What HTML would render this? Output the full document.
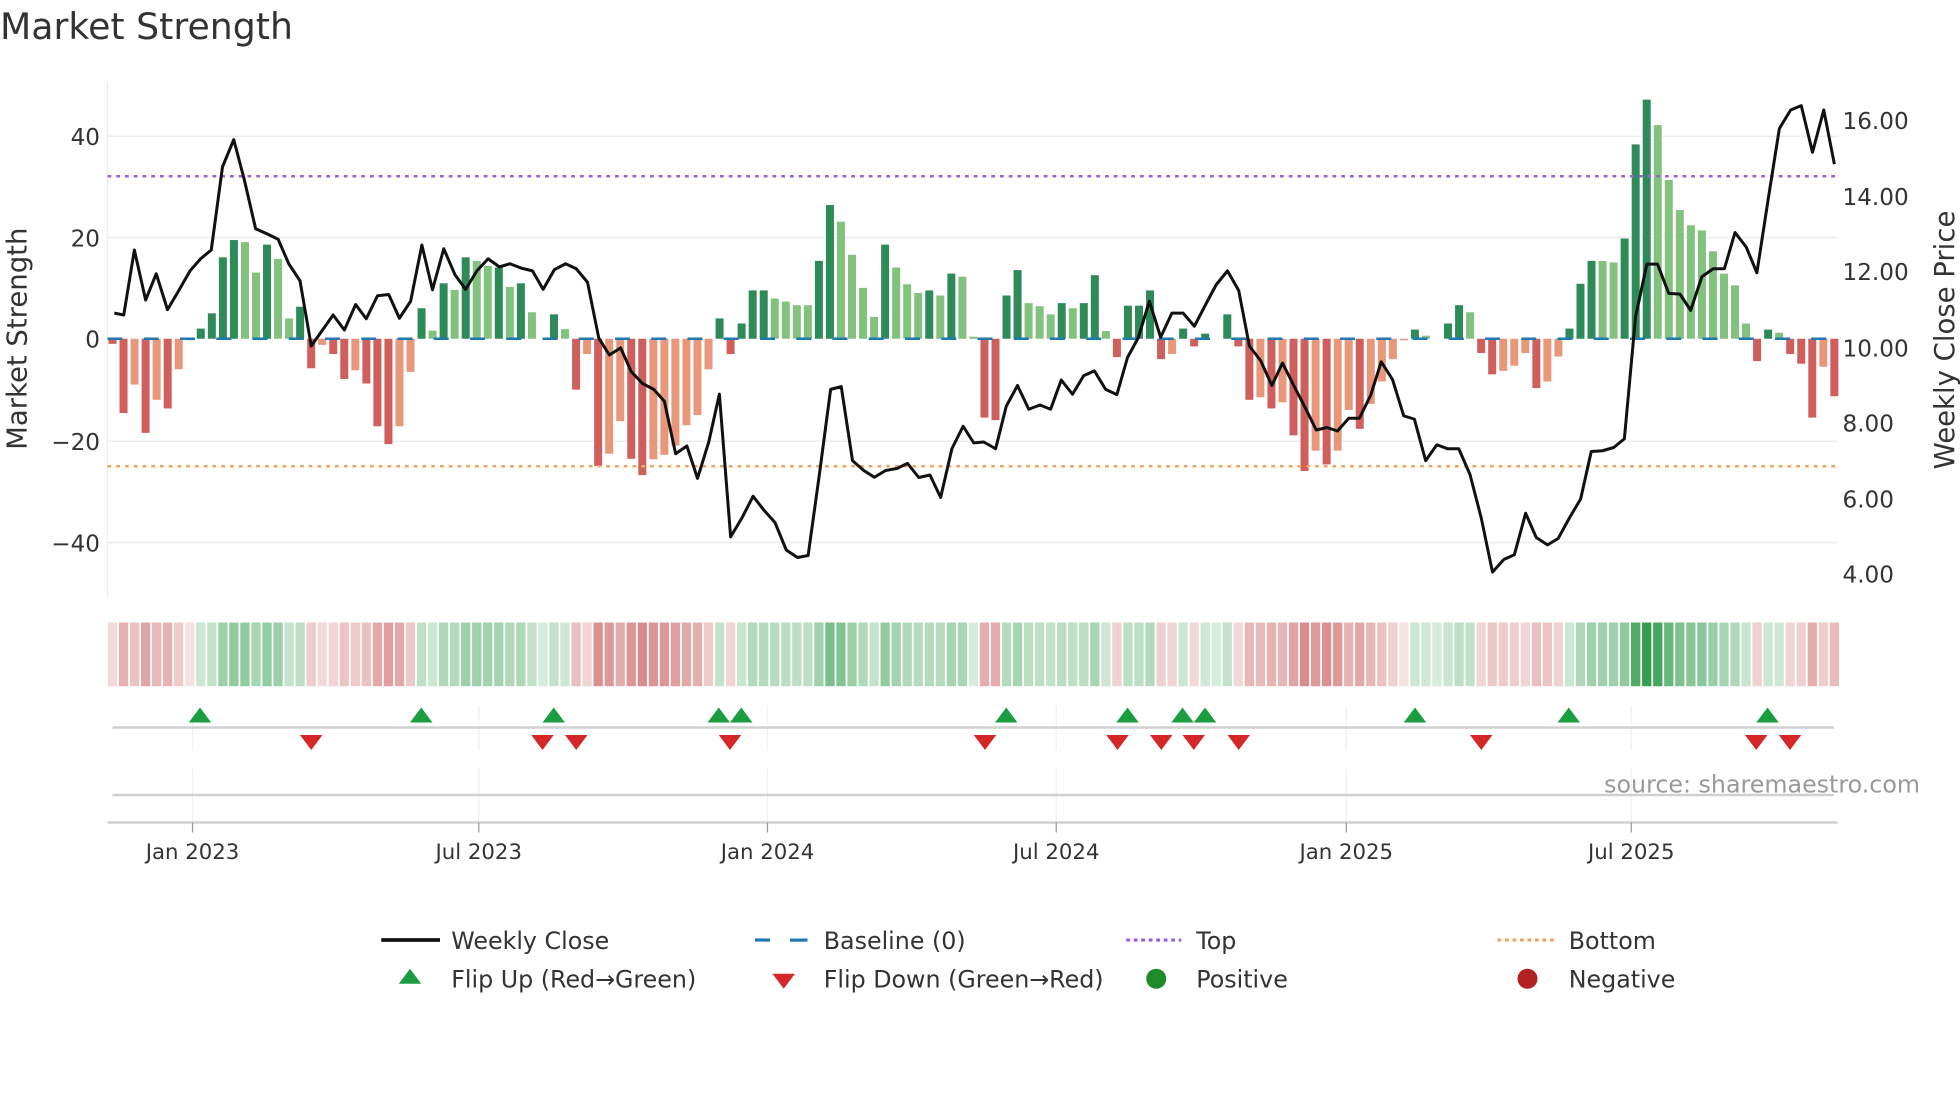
<!DOCTYPE html>
<html><head><meta charset="utf-8"><style>
html,body{margin:0;padding:0;background:#fff;}
svg{display:block;font-family:"DejaVu Sans","Liberation Sans",sans-serif;}
</style></head><body>
<svg id="s" width="1960" height="1102" viewBox="0 0 1568 881.6" xmlns="http://www.w3.org/2000/svg">
<rect width="1568" height="882" fill="#fff"/>
<text x="0" y="31" font-size="29" fill="#333">Market Strength</text>
<g stroke="#ececf0" stroke-width="1.2">
<line x1="86" y1="109" x2="1470" y2="109"/><line x1="86" y1="190" x2="1470" y2="190"/>
<line x1="86" y1="353" x2="1470" y2="353"/><line x1="86" y1="434" x2="1470" y2="434"/>
</g>
<line x1="86" y1="65" x2="86" y2="478" stroke="#eee" stroke-width="1"/>
<g id="bars"></g>
<line x1="86" y1="271" x2="1470" y2="271" stroke="#1f77b4" stroke-width="2" stroke-dasharray="12 17"/>
<line x1="86" y1="141" x2="1470" y2="141" stroke="#9b5de5" stroke-width="2" stroke-dasharray="3 4"/>
<line x1="86" y1="373" x2="1470" y2="373" stroke="#f4a460" stroke-width="2" stroke-dasharray="3 4"/>
<path id="price" fill="none" stroke="#111" stroke-width="2.4" stroke-linejoin="round"/>
<g font-size="18.5" fill="#333" text-anchor="end">
<text x="80" y="116">40</text><text x="80" y="197">20</text><text x="80" y="278">0</text>
<text x="80" y="360">−20</text><text x="80" y="441">−40</text>
</g>
<g font-size="18.5" fill="#333">
<text x="1474" y="103">16.00</text><text x="1474" y="164">14.00</text><text x="1474" y="224">12.00</text>
<text x="1474" y="285">10.00</text><text x="1474" y="345">8.00</text><text x="1474" y="406">6.00</text><text x="1474" y="466">4.00</text>
</g>
<text transform="translate(21,271) rotate(-90)" font-size="22" fill="#333" text-anchor="middle">Market Strength</text>
<text transform="translate(1563,272) rotate(-90)" font-size="22" fill="#333" text-anchor="middle">Weekly Close Price</text>
<g id="heat"></g>
<g stroke="#eef0f3" stroke-width="1">
<line x1="154" y1="565" x2="154" y2="600"/><line x1="383" y1="565" x2="383" y2="600"/><line x1="614" y1="565" x2="614" y2="600"/><line x1="845" y1="565" x2="845" y2="600"/><line x1="1077" y1="565" x2="1077" y2="600"/><line x1="1305" y1="565" x2="1305" y2="600"/>
<line x1="154" y1="615" x2="154" y2="658"/><line x1="383" y1="615" x2="383" y2="658"/><line x1="614" y1="615" x2="614" y2="658"/><line x1="845" y1="615" x2="845" y2="658"/><line x1="1077" y1="615" x2="1077" y2="658"/><line x1="1305" y1="615" x2="1305" y2="658"/>
</g>
<line x1="90" y1="582" x2="1467" y2="582" stroke="#d0d0d0" stroke-width="2"/>
<line x1="90" y1="636" x2="1467" y2="636" stroke="#d0d0d0" stroke-width="2"/>
<line x1="86" y1="658" x2="1470" y2="658" stroke="#d0d0d0" stroke-width="2"/>
<g stroke="#999" stroke-width="1">
<line x1="154" y1="658" x2="154" y2="666"/><line x1="383" y1="658" x2="383" y2="666"/><line x1="614" y1="658" x2="614" y2="666"/><line x1="845" y1="658" x2="845" y2="666"/><line x1="1077" y1="658" x2="1077" y2="666"/><line x1="1305" y1="658" x2="1305" y2="666"/>
</g>
<g id="flips"></g>
<text x="1536" y="634" font-size="19" fill="#999" text-anchor="end">source: sharemaestro.com</text>
<g font-size="17" fill="#333" text-anchor="middle">
<text x="154" y="687">Jan 2023</text><text x="383" y="687">Jul 2023</text><text x="614" y="687">Jan 2024</text>
<text x="845" y="687">Jul 2024</text><text x="1077" y="687">Jan 2025</text><text x="1305" y="687">Jul 2025</text>
</g>
<g font-size="19" fill="#333">
<line x1="305" y1="752" x2="352" y2="752" stroke="#111" stroke-width="3"/>
<text x="361" y="759">Weekly Close</text>
<line x1="604" y1="752" x2="646" y2="752" stroke="#1f77b4" stroke-width="2.5" stroke-dasharray="12 17"/>
<line x1="632" y1="752" x2="646" y2="752" stroke="#1f77b4" stroke-width="2.5"/>
<text x="659" y="759">Baseline (0)</text>
<line x1="901" y1="752" x2="945" y2="752" stroke="#9b5de5" stroke-width="2.5" stroke-dasharray="3 3"/>
<text x="957" y="759">Top</text>
<line x1="1198" y1="752" x2="1243" y2="752" stroke="#f4a460" stroke-width="2.5" stroke-dasharray="3 3"/>
<text x="1255" y="759">Bottom</text>
<polygon points="328,775 337,787 319,787" fill="#1a9e3f"/>
<text x="361" y="790">Flip Up (Red→Green)</text>
<polygon points="618,779 636,779 627,791" fill="#d62728"/>
<text x="659" y="790">Flip Down (Green→Red)</text>
<circle cx="925" cy="783" r="8" fill="#1e8c2a"/>
<text x="957" y="790">Positive</text>
<circle cx="1222" cy="783" r="8" fill="#b22222"/>
<text x="1255" y="790">Negative</text>
</g>
</svg>
<script>
(function(){
var NS="http://www.w3.org/2000/svg";
var D=[[-1,'r'],[-14.6,'r'],[-9,'o'],[-18.5,'r'],[-12,'o'],[-13.7,'r'],[-6,'o'],[-0.3,'o'],[2,'d'],[5,'d'],[16,'d'],[19.4,'d'],[19,'l'],[13,'l'],[18.5,'d'],[15.7,'l'],[4,'l'],[6.3,'d'],[-5.8,'r'],[-1.2,'o'],[-3,'r'],[-7.9,'r'],[-6.2,'o'],[-8.8,'r'],[-17.2,'r'],[-20.7,'r'],[-17.2,'o'],[-6.5,'o'],[6,'d'],[1.6,'l'],[10.9,'d'],[9.6,'l'],[16,'d'],[15.3,'l'],[14.3,'l'],[14,'d'],[10.2,'l'],[10.9,'d'],[5.2,'l'],[0,'l'],[4.8,'d'],[1.9,'l'],[-10,'r'],[-3,'o'],[-25,'r'],[-22.6,'o'],[-16.2,'o'],[-23.6,'r'],[-26.8,'r'],[-23.7,'o'],[-22.8,'o'],[-21,'o'],[-17,'o'],[-15,'o'],[-6,'o'],[4,'d'],[-3,'r'],[3,'d'],[9.5,'d'],[9.5,'d'],[7.9,'l'],[7.3,'l'],[6.6,'l'],[6.6,'l'],[15.3,'d'],[26.3,'d'],[23,'l'],[16.5,'l'],[10,'l'],[4.3,'l'],[18.5,'d'],[14,'l'],[10.7,'l'],[9,'l'],[9.5,'d'],[8.5,'l'],[12.8,'d'],[12.2,'l'],[0.4,'l'],[-15.5,'r'],[-16,'r'],[8.5,'d'],[13.5,'d'],[7,'l'],[6.4,'l'],[4.8,'l'],[7,'d'],[6,'l'],[7,'d'],[12.5,'d'],[1.5,'l'],[-3.6,'r'],[6.5,'d'],[6.5,'d'],[9.5,'d'],[-4,'r'],[-3,'o'],[2,'d'],[-1.5,'r'],[1,'d'],[0,'l'],[4.8,'d'],[-1.5,'r'],[-12,'r'],[-11.5,'o'],[-13.7,'r'],[-12.5,'o'],[-19,'r'],[-26,'r'],[-22,'o'],[-24.7,'r'],[-22,'o'],[-14,'o'],[-17.7,'r'],[-12.8,'o'],[-8.4,'o'],[-4,'o'],[-0.3,'o'],[1.8,'d'],[0.6,'l'],[0,'l'],[3,'d'],[6.6,'d'],[5.2,'l'],[-2.8,'r'],[-7,'r'],[-6.3,'o'],[-5.3,'o'],[-2.8,'o'],[-9.7,'r'],[-8.4,'o'],[-3.5,'o'],[2,'d'],[10.8,'d'],[15.3,'d'],[15.3,'l'],[15,'l'],[19.7,'d'],[38.2,'d'],[47,'d'],[42,'l'],[31.2,'l'],[25.3,'l'],[22.3,'l'],[21.3,'l'],[17.2,'l'],[12.8,'l'],[10.5,'l'],[3,'l'],[-4.4,'r'],[1.8,'d'],[1.2,'l'],[-3,'r'],[-4.9,'r'],[-15.5,'r'],[-5.5,'o'],[-11.3,'r']];
var C={d:'#2e8b57',l:'#82c17e',r:'#cf5f5c',o:'#e9977a'};
var bars=document.getElementById('bars'),heat=document.getElementById('heat');
var step=8.83;
D.forEach(function(b,i){
 var x=90+i*step,v=b[0],y0=271,h=Math.abs(v)*4.07;
 if(h>0.2){var r=document.createElementNS(NS,'rect');
 r.setAttribute('x',(x-3.2).toFixed(2));r.setAttribute('width','6.4');
 r.setAttribute('y',(v>0?y0-h:y0).toFixed(2));r.setAttribute('height',h.toFixed(2));
 r.setAttribute('fill',C[b[1]]);bars.appendChild(r);}
 var c=document.createElementNS(NS,'rect');
 c.setAttribute('x',(x-step/2+0.7).toFixed(2));c.setAttribute('width',(step-1.4).toFixed(2));
 c.setAttribute('y','498');c.setAttribute('height','51');
 var col;
 if(v>0.5){col='rgba(52,158,78,'+(0.22+0.78*Math.min(1,v/47)).toFixed(3)+')';}
 else if(v<-0.5){col='rgba(200,88,88,'+(0.2+0.5*Math.min(1,-v/27)).toFixed(3)+')';}
 else{col=b[1]=='d'||b[1]=='l'?'rgba(52,158,78,0.2)':'rgba(200,88,88,0.18)';}
 c.setAttribute('fill',col);heat.appendChild(c);
});
var P=[[91.5,250.5],[99,252],[107.5,200],[116.5,240],[125,219],[134,247.7],[143,232.5],[152,216.7],[160.5,207],[169,200],[178,133.5],[187,111.7],[195.5,144],[204.5,183],[213.5,187],[222.5,191.4],[231,211],[240,224.6],[249,276.8],[258,264],[266.5,252],[275.5,264],[284.5,243.6],[293,255],[302,236.6],[311,235.6],[319.5,254.6],[328.5,241],[337.5,196],[346,231.8],[355,199],[364,219.8],[372.5,231.5],[381.5,216.7],[390.5,207],[399.5,213.5],[408,211],[417,214.5],[426,216.7],[434.5,231.5],[443.5,215.7],[452.5,211],[461,215],[470,225.8],[479,270.4],[487.5,284],[496.5,278.3],[505,297.3],[514,306.8],[523,311.5],[531.5,321],[540.5,363],[549.5,356.8],[558,382.7],[567,353.6],[575.5,315.3],[584.5,429.5],[593.5,414.4],[602.5,397],[611,408],[620,418],[629,440],[638,446],[646.5,444.4],[655.5,379.6],[664.5,311.5],[673,309.3],[682,368.5],[691,376.4],[699.5,381.8],[708.5,376.4],[717.5,374.8],[726,370.7],[735,382],[744,380],[752.5,398],[761.5,359],[770.5,341],[779,354.3],[787,353.6],[796.5,359],[805,325],[814,308.4],[823,327.4],[832,324],[840.5,327.4],[849,304],[858,315.4],[867,300.5],[875.5,296.7],[884.5,311.5],[893.5,315.7],[902,286],[910.5,270.4],[919.5,241],[928.5,269.8],[937.5,250.5],[946.5,250.5],[955.5,261],[964.5,243.6],[973,227.7],[982,216.7],[991,232.5],[999.5,276.8],[1008.5,288.5],[1017.5,308.4],[1026,290.4],[1035,308.4],[1044,325.8],[1053,344],[1061.5,342],[1070,344.8],[1079,334.6],[1087.5,334.6],[1096.5,316.3],[1105,289.4],[1114,303.6],[1123,332.7],[1131.5,335.3],[1140.5,368.5],[1149.5,355.8],[1158,359],[1167,359],[1176,379.6],[1185,414.4],[1194,457.7],[1203,447.6],[1211.5,443.8],[1220.5,410.6],[1229,430],[1238,435.9],[1246.5,430.8],[1255.5,414.4],[1264.5,399.2],[1273,361.2],[1282,360.6],[1291,358],[1299.5,351],[1308.5,253],[1317.5,211.3],[1326,211.3],[1335,234.7],[1344,235.3],[1352.5,248.3],[1361.5,221.4],[1370.5,215],[1379.5,215],[1388,186],[1397,197.7],[1405.5,218.2],[1414.5,159.7],[1423.5,102.8],[1432.5,88],[1441,84.5],[1450,121.8],[1459,88],[1467.5,131.3]];
document.getElementById('price').setAttribute('d','M'+P.map(function(p){return p[0]+','+p[1];}).join(' L'));
var fl=document.getElementById('flips');
[160,337,443,575,593,805,902,946,964,1132,1255,1414].forEach(function(x){
 var t=document.createElementNS(NS,'polygon');t.setAttribute('points',x+',566 '+(x+9)+',578 '+(x-9)+',578');t.setAttribute('fill','#1a9e3f');fl.appendChild(t);});
[249,434,461,584,788,894,929,955,991,1185,1405,1432].forEach(function(x){
 var t=document.createElementNS(NS,'polygon');t.setAttribute('points',(x-9)+',588 '+(x+9)+',588 '+x+',600');t.setAttribute('fill','#d62728');fl.appendChild(t);});
})();
</script>
</body></html>
